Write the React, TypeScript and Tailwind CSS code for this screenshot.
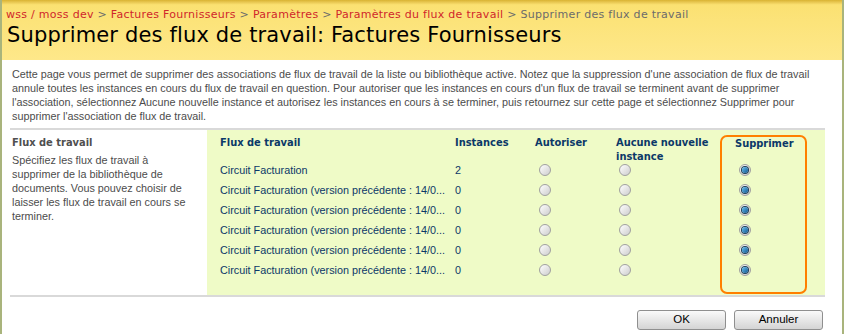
const rows = [
  { name: 'Circuit Facturation', count: '2' },
  { name: 'Circuit Facturation (version précédente : 14/0...', count: '0' },
  { name: 'Circuit Facturation (version précédente : 14/0...', count: '0' },
  { name: 'Circuit Facturation (version précédente : 14/0...', count: '0' },
  { name: 'Circuit Facturation (version précédente : 14/0...', count: '0' },
  { name: 'Circuit Facturation (version précédente : 14/0...', count: '0' },
];

const Radio = ({ checked }: { checked?: boolean }) => (
  <span className="flex h-[12px] w-[12px] items-center justify-center rounded-full border border-[#a0a0a0] bg-gradient-to-br from-[#ffffff] to-[#cdcdcd]">
    {checked && (
      <span className="h-[6px] w-[6px] rounded-full bg-gradient-to-br from-[#6cc4f2] to-[#0a5590] shadow-[0_0_0_1px_#1d3d55]" />
    )}
  </span>
);

const Crumb = ({ children }: { children: React.ReactNode }) => (
  <span className="text-[#d0262b]">{children}</span>
);

const Head = ({ children }: { children: React.ReactNode }) => (
  <div className="h-[24px] whitespace-nowrap font-['DejaVu_Sans_Condensed',sans-serif] text-[11px] font-bold leading-[14px]">
    {children}
  </div>
);

const RadioCol = ({ offset, checked }: { offset: string; checked?: boolean }) => (
  <>
    {rows.map((_, i) => (
      <div key={i} className={`flex h-[20px] items-center ${offset}`}>
        <Radio checked={checked} />
      </div>
    ))}
  </>
);

export default function App() {
  return (
    <div className="flex h-[334px] w-[844px] flex-col overflow-hidden border-l-2 border-r-2 border-[#a9b47c] bg-white font-['DejaVu_Sans',sans-serif]">
      <div className="h-[60px] shrink-0 bg-gradient-to-b from-[#d9b331] via-[#fbe172] via-[8%] to-[#fee88a] pl-[4px] pt-[8px]">
        <div className="whitespace-nowrap text-[11px] leading-[14px] tracking-[0.28px] text-[#6b6b6b]">
          <Crumb>wss / moss dev</Crumb> &gt; <Crumb>Factures Fournisseurs</Crumb> &gt; <Crumb>Paramètres</Crumb> &gt;{' '}
          <Crumb>Paramètres du flux de travail</Crumb> &gt; Supprimer des flux de travail
        </div>
        <div className="mt-[1px] whitespace-nowrap pl-[1px] text-[21px] leading-[24px] tracking-[0.15px] text-black">
          Supprimer des flux de travail: Factures Fournisseurs
        </div>
      </div>

      <div className="flex flex-1 flex-col px-[8px] font-['Liberation_Sans',sans-serif] text-[10.8px]">
        <p className="whitespace-nowrap pl-[2px] pt-[7px] leading-[14px] text-[#4c4c4c]">
          Cette page vous permet de supprimer des associations de flux de travail de la liste ou bibliothèque active. Notez que la suppression d'une association de flux de travail
          <br />
          annule toutes les instances en cours du flux de travail en question. Pour autoriser que les instances en cours d'un flux de travail se terminent avant de supprimer
          <br />
          l'association, sélectionnez Aucune nouvelle instance et autorisez les instances en cours à se terminer, puis retournez sur cette page et sélectionnez Supprimer pour
          <br />
          supprimer l'association de flux de travail.
        </p>

        <div className="mt-[5px] flex w-[815px] border-b-2 border-t-2 border-[#d9d9d9]">
          <div className="w-[197px] shrink-0 pl-[2px] pt-[6px]">
            <div className="font-['DejaVu_Sans_Condensed',sans-serif] text-[11px] font-bold leading-[14px] text-[#4f4f4f]">
              Flux de travail
            </div>
            <p className="mt-[3px] leading-[14px] text-[#4c4c4c]">
              Spécifiez les flux de travail à
              <br />
              supprimer de la bibliothèque de
              <br />
              documents. Vous pouvez choisir de
              <br />
              laisser les flux de travail en cours se
              <br />
              terminer.
            </p>
          </div>

          <div className="flex flex-1 items-start bg-[#effbc7] pb-[1px] pl-[13px] pt-[5px] text-[#0b3868]">
            <div className="flex w-[235px] flex-col pt-[1px]">
              <Head>Flux de travail</Head>
              {rows.map((r, i) => (
                <div key={i} className="flex h-[20px] items-center whitespace-nowrap">
                  {r.name}
                </div>
              ))}
            </div>
            <div className="flex w-[80px] flex-col pt-[1px]">
              <Head>Instances</Head>
              {rows.map((r, i) => (
                <div key={i} className="flex h-[20px] items-center">
                  {r.count}
                </div>
              ))}
            </div>
            <div className="flex w-[81px] flex-col pt-[1px]">
              <Head>Autoriser</Head>
              <RadioCol offset="pl-[4px]" />
            </div>
            <div className="flex w-[104px] flex-col pt-[1px]">
              <Head>
                Aucune nouvelle
                <br />
                instance
              </Head>
              <RadioCol offset="pl-[3px]" />
            </div>
            <div className="flex w-[87px] flex-col rounded-[7px] border-2 border-[#ff7f00] pb-[12px]">
              <div className="h-[23px] whitespace-nowrap pl-[13px] font-['DejaVu_Sans_Condensed',sans-serif] text-[11px] font-bold leading-[14px]">
                Supprimer
              </div>
              <RadioCol offset="pl-[17px]" checked />
            </div>
          </div>
        </div>

        <div className="mt-[13px] flex w-[813px] justify-end gap-[8px]">
          <button className="h-[20px] w-[89px] rounded-[3px] border border-[#8f8f8f] bg-gradient-to-b from-[#fafafa] to-[#d4d4d4] text-[11.5px] text-black">
            OK
          </button>
          <button className="h-[20px] w-[89px] rounded-[3px] border border-[#8f8f8f] bg-gradient-to-b from-[#fafafa] to-[#d4d4d4] text-[11.5px] text-black">
            Annuler
          </button>
        </div>
      </div>
    </div>
  );
}
